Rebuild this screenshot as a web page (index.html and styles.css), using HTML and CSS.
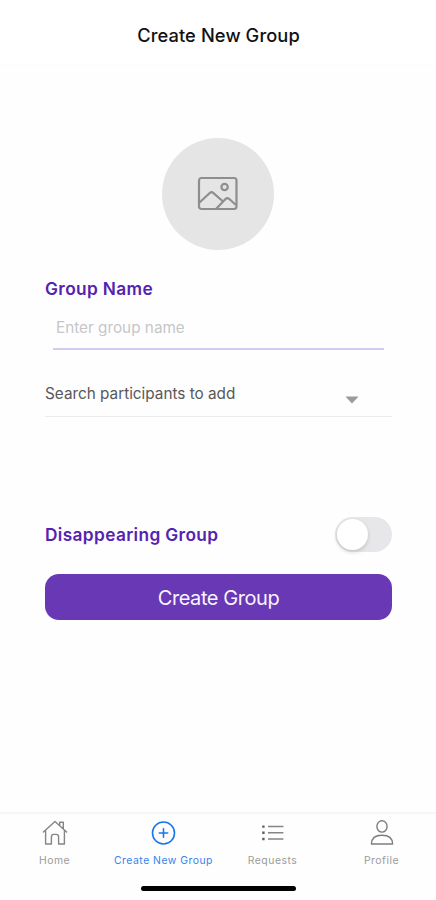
FILE: index.html
```html
<!DOCTYPE html>
<html lang="en">
<head>
<meta charset="utf-8">
<meta name="viewport" content="width=device-width, initial-scale=1">
<title>Create New Group</title>
<link rel="stylesheet" href="styles.css">
</head>
<body>
<div class="screen">
  <header class="header"><h1 class="title">Create New Group</h1></header>
  <main class="form">
    <button class="avatar" type="button" aria-label="Choose group picture">
      <svg width="42" height="36" viewBox="0 0 42 36" fill="none" stroke="#8e8e90" stroke-width="2.2" stroke-linejoin="round">
        <rect x="2" y="2" width="37.5" height="31" rx="2.5"/>
        <circle cx="27.6" cy="11" r="3.2"/>
        <path d="M2.5 26.5 13 16.8Q14.6 15.4 16.2 16.8L25.5 25M19 33 28.5 23Q30.2 21.3 32 22.8L39 29"/>
      </svg>
    </button>
    <label class="label" for="group-name">Group Name</label>
    <input class="name-input" id="group-name" type="text" placeholder="Enter group name">
    <div class="select">
      <span class="select-text">Search participants to add</span>
      <svg class="caret" width="14" height="8" viewBox="0 0 14 8"><path d="M.4.4h13.2L7 7.6z" fill="#9b9b9b"/></svg>
    </div>
    <div class="toggle-row">
      <span class="label">Disappearing Group</span>
      <span class="switch" role="switch" aria-checked="false"><span class="knob"></span></span>
    </div>
    <button class="submit" type="button">Create Group</button>
  </main>
  <nav class="tabs">
    <a class="tab">
      <svg class="icon" width="28" height="28" viewBox="0 0 28 28" fill="none" stroke="#858585" stroke-width="1.4" stroke-linejoin="round" stroke-linecap="round">
        <path d="M2.4 13 14 2.5 25.6 13M4.6 11.5V25h5.8v-7.2q0-2.4 2.4-2.4h2.4q2.4 0 2.4 2.4V25h5.8V11.5M18.7 6.3V3.2h3.6v6.4"/>
      </svg>
      <span class="tab-text">Home</span>
    </a>
    <a class="tab active">
      <svg class="icon" width="28" height="28" viewBox="0 0 28 28" fill="none" stroke="#1877ee" stroke-width="1.6" stroke-linecap="round">
        <circle cx="13.5" cy="14" r="11"/><path d="M13.5 9.8v8.4M9.3 14h8.4"/>
      </svg>
      <span class="tab-text">Create New Group</span>
    </a>
    <a class="tab">
      <svg class="icon" width="28" height="28" viewBox="0 0 28 28" fill="none" stroke="#858585" stroke-width="1.5">
        <path d="M9 7.6h15.4M9 13.8h15.4M9 20h15.4"/>
        <path d="M3.2 7.6h2.4M3.2 13.8h2.4M3.2 20h2.4" stroke="#606060" stroke-width="2.4"/>
      </svg>
      <span class="tab-text">Requests</span>
    </a>
    <a class="tab">
      <svg class="icon" width="28" height="28" viewBox="0 0 28 28" fill="none" stroke="#7d7d7d" stroke-width="1.4" stroke-linejoin="round">
        <ellipse cx="14" cy="7.4" rx="5.1" ry="5.7"/>
        <path d="M3.4 25Q3.6 16.3 14 16.3T24.6 25z"/>
      </svg>
      <span class="tab-text">Profile</span>
    </a>
  </nav>
  <div class="home-bar"></div>
</div>
</body>
</html>
```
FILE: styles.css
```css
* { box-sizing: border-box; }
body {
  margin: 0;
  background: #fefefe;
  font-family: Inter, "Liberation Sans", sans-serif;
}
button, input { font-family: inherit; border: 0; padding: 0; }
.screen { height: 900px; display: flex; flex-direction: column; }
.header {
  height: 65px;
  padding: 23px 0 0 1px;
  background: #fff;
  border-bottom: 1px solid #fcfcfc;
}
.title {
  margin: 0;
  text-align: center;
  font-size: 18.3px;
  line-height: 24px;
  font-weight: 500;
  letter-spacing: .1px;
  color: #111;
}
.form {
  flex: 1;
  display: flex;
  flex-direction: column;
  padding: 73px 44px 0 45px;
}
.avatar {
  width: 112px;
  height: 112px;
  margin-left: 117.4px;
  border-radius: 50%;
  background: #e5e5e5;
  display: flex;
  align-items: center;
  justify-content: center;
}
.label {
  font-size: 17.3px;
  line-height: 24px;
  font-weight: 600;
  letter-spacing: .36px;
  color: #5522b0;
}
.avatar + .label { margin-top: 27px; }
.name-input {
  height: 44px;
  margin: 5px 8px 0;
  padding: 0 3px 0;
  background: transparent;
  border-bottom: 2px solid #d3cbf5;
  font-size: 15.3px;
  border-radius: 0;
}
.name-input::placeholder { color: #c6c6c8; opacity: 1; }
.select {
  height: 67px;
  padding-top: 32px;
  border-bottom: 1px solid #ebebeb;
  display: flex;
  justify-content: space-between;
}
.select-text { font-size: 15.3px; line-height: 24px; color: #58585a; }
.caret { margin: 14px 33px 0 0; }
.toggle-row {
  margin-top: 100px;
  height: 35px;
  display: flex;
  align-items: center;
  justify-content: space-between;
}
.switch {
  width: 57px;
  height: 35px;
  padding: 2px;
  border-radius: 18px;
  background: #e7e7e9;
}
.knob {
  display: block;
  width: 31px;
  height: 31px;
  border-radius: 50%;
  background: #fff;
  box-shadow: 0 2px 4px rgba(0, 0, 0, .16);
}
.submit {
  height: 46px;
  margin-top: 22px;
  padding-top: 1px;
  border-radius: 14px;
  background: #6938b5;
  color: #f8f4ff;
  font-size: 20px;
  letter-spacing: -.43px;
}
.tabs {
  height: 74px;
  display: grid;
  grid-template-columns: repeat(4, 1fr);
  border-top: 2px solid #f6f6f6;
}
.tab {
  display: flex;
  flex-direction: column;
  align-items: center;
  padding-top: 5px;
  color: #9b9b9b;
}
.active { color: #3484ed; }
.tab-text {
  margin-top: 7px;
  font-size: 10.4px;
  line-height: 14px;
  letter-spacing: .5px;
  white-space: nowrap;
}
.home-bar {
  width: 155px;
  height: 5px;
  margin: 0 0 9px 141px;
  border-radius: 3px;
  background: #000;
}
```
